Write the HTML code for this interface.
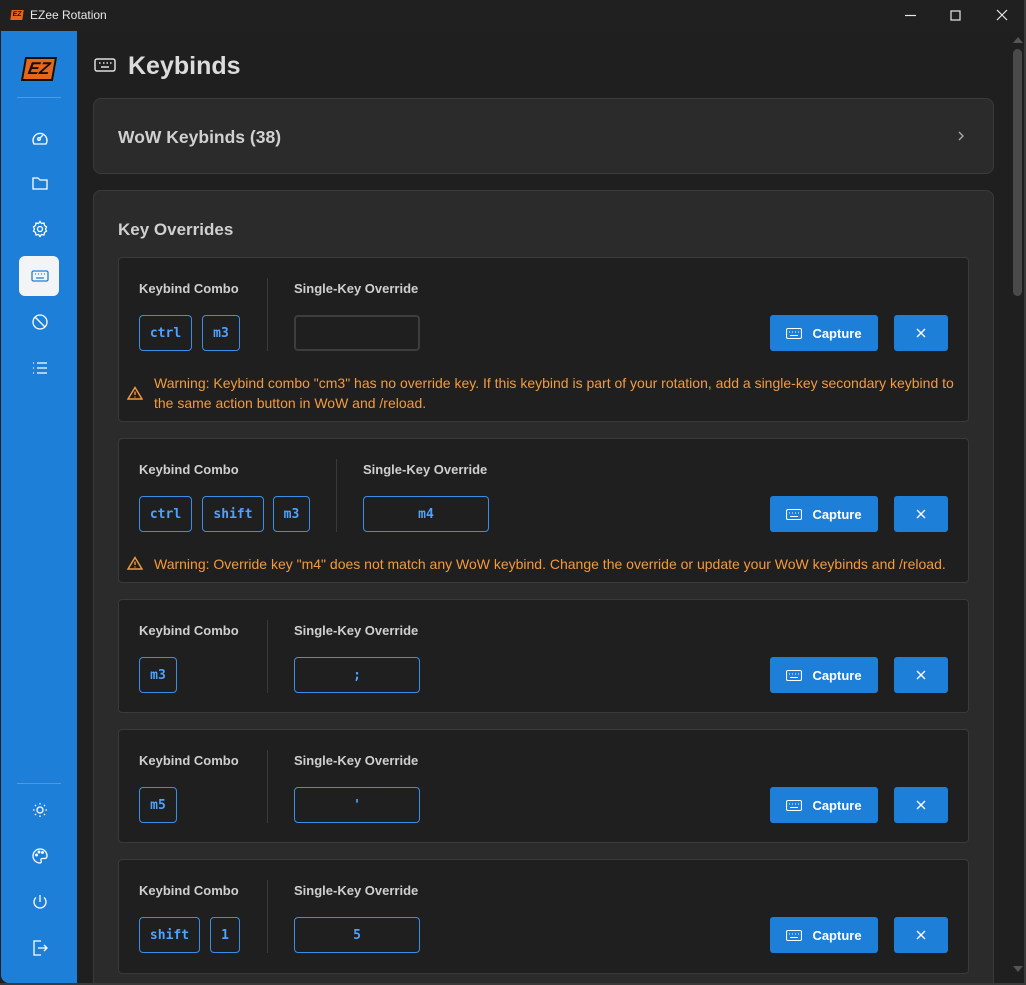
<!DOCTYPE html>
<html><head><meta charset="utf-8"><style>
*{box-sizing:border-box;margin:0;padding:0}
html{width:1026px;height:985px;overflow:hidden}
body{width:1026px;height:985px;background:#1f1f1f;font-family:"Liberation Sans",sans-serif;position:relative;overflow:hidden}
.a{position:absolute}
.title{left:0;top:0;width:1026px;height:31px;background:#202020;color:#e8e8e8;font-size:12px}
.side{left:1px;top:31px;width:76px;height:952px;background:#1e7fd8;border-radius:0 0 0 8px}
.ic{position:absolute;left:29px;width:20px;height:20px}
.card{position:absolute;left:93px;width:901px;background:#2b2b2b;border:1px solid #3a3a3a;border-radius:8px}
.in{position:absolute;left:118px;width:851px;background:#1f1f1f;border:1px solid #3a3a3a;border-radius:4px}
.lbl{position:absolute;font-size:13px;font-weight:bold;color:#cfcfcf;top:23px}
.chip{position:absolute;top:57px;height:36px;border:1px solid #3a8ee6;border-radius:4px;color:#4da3ff;font-family:"DejaVu Sans Mono","Liberation Mono",monospace;font-weight:bold;font-size:13px;display:flex;align-items:center;justify-content:center}
.ov{position:absolute;top:57px;height:36px;width:126px;border:1px solid #3a8ee6;border-radius:4px;color:#4da3ff;font-family:"DejaVu Sans Mono","Liberation Mono",monospace;font-weight:bold;font-size:13px;display:flex;align-items:center;justify-content:center}
.div{position:absolute;top:20px;height:73px;width:1px;background:#3a3a3a}
.cap{position:absolute;left:651px;top:57px;width:108px;height:36px;background:#1e7fd8;border-radius:3px;color:#fff;font-weight:bold;font-size:13px;display:flex;align-items:center;justify-content:center;gap:10px}
.x{position:absolute;left:775px;top:57px;width:54px;height:36px;background:#1e7fd8;border-radius:3px;display:flex;align-items:center;justify-content:center}
.warn{position:absolute;left:35px;color:#f59a3c;font-size:14px;line-height:20px;width:812px;white-space:nowrap}
.wi{position:absolute;left:8px}
</style></head><body>
<div class="a title">
<div class="a" style="left:11px;top:10px;width:12px;height:10px;background:#e8661a;color:#111;font-size:7px;font-weight:bold;line-height:10px;text-align:center;transform:skewX(-8deg)">EZ</div>
<div class="a" style="left:30px;top:8px">EZee Rotation</div>
<svg class="a" style="left:900px;top:8px" width="120" height="16" stroke="#e8e8e8" stroke-width="1.2" fill="none"><line x1="5" y1="7.5" x2="16" y2="7.5"/><rect x="51" y="3" width="9" height="9"/><path d="M97 2l10 10M107 2l-10 10"/></svg>
</div>
<div class="a side">
<div class="a" style="left:22px;top:26px;width:32px;height:24px;background:#e8661a;border:2px solid #111;color:#111;font-weight:bold;font-size:17px;line-height:20px;text-align:center;transform:skewX(-10deg);font-style:italic">EZ</div>
<div class="a" style="left:16px;top:66px;width:44px;height:1px;background:#4b9ae6"></div>
<svg class="ic" style="top:97px" viewBox="0 0 20 20" fill="none" stroke="#fff" stroke-width="1.3"><path d="M4 16a7 7 0 1 1 12 0z"/><circle cx="9" cy="11" r="1.3"/><path d="M10 10l3-3"/></svg>
<svg class="ic" style="top:142px" viewBox="0 0 20 20" fill="none" stroke="#fff" stroke-width="1.3"><path d="M3 5h5l2 2h7v9H3z"/></svg>
<svg class="ic" style="top:188px" viewBox="0 0 20 20" fill="none" stroke="#fff" stroke-width="1.3"><circle cx="10" cy="10" r="2.5"/><path d="M10 2.5l1.5 2 2.5-.5.5 2.5 2 1.5-1 2 1 2-2 1.5-.5 2.5-2.5-.5-1.5 2-1.5-2-2.5.5-.5-2.5-2-1.5 1-2-1-2 2-1.5.5-2.5 2.5.5z"/></svg>
<div class="a" style="left:18px;top:225px;width:40px;height:40px;background:#f3f4f6;border-radius:6px"></div>
<svg class="ic" style="top:235px" viewBox="0 0 20 20" fill="none" stroke="#1e7fd8" stroke-width="1.3"><rect x="2" y="5" width="16" height="10" rx="1.5"/><path d="M5 8h1M8 8h1M11 8h1M14 8h1M6 12h8"/></svg>
<svg class="ic" style="top:281px" viewBox="0 0 20 20" fill="none" stroke="#fff" stroke-width="1.3"><circle cx="10" cy="10" r="7"/><path d="M5 5l10 10"/></svg>
<svg class="ic" style="top:327px" viewBox="0 0 20 20" fill="none" stroke="#fff" stroke-width="1.3"><path d="M3 5h1M3 10h1M3 15h1M7 5h10M7 10h10M7 15h10"/></svg>
<div class="a" style="left:16px;top:752px;width:44px;height:1px;background:#4b9ae6"></div>
<svg class="ic" style="top:769px" viewBox="0 0 20 20" fill="none" stroke="#fff" stroke-width="1.3"><circle cx="10" cy="10" r="3"/><path d="M10 3v1.5M10 15.5V17M3 10h1.5M15.5 10H17M5 5l1 1M14 14l1 1M5 15l1-1M14 6l1-1"/></svg>
<svg class="ic" style="top:815px" viewBox="0 0 20 20" fill="none" stroke="#fff" stroke-width="1.3"><path d="M10 3a7 7 0 0 0 0 14c1.5 0 1.5-1.5 1-2.5s0-2 1.5-2H15a2.5 2.5 0 0 0 2-2.5C17 6 14 3 10 3z"/><circle cx="6.5" cy="9" r=".8"/><circle cx="9" cy="6" r=".8"/><circle cx="12.5" cy="6.5" r=".8"/></svg>
<svg class="ic" style="top:861px" viewBox="0 0 20 20" fill="none" stroke="#fff" stroke-width="1.3"><path d="M10 3v7M6 5.5a6 6 0 1 0 8 0"/></svg>
<svg class="ic" style="top:907px" viewBox="0 0 20 20" fill="none" stroke="#fff" stroke-width="1.3"><path d="M11 3H4v14h7M8 10h9M14 7l3 3-3 3"/></svg>
</div>
<svg class="a" style="left:94px;top:57px" width="22" height="16" viewBox="0 0 22 16" fill="none" stroke="#ddd" stroke-width="1.5"><rect x="1" y="2" width="20" height="12" rx="2"/><path d="M5 6h1.5M9 6h1.5M12.5 6h1.5M16 6h1.5M7 10h8"/></svg>
<div class="a" style="left:128px;top:52px;font-size:25px;font-weight:bold;color:#dcdcdc">Keybinds</div>
<div class="card" style="top:98px;height:76px"><div class="a" style="left:24px;top:28px;font-size:17.5px;font-weight:bold;color:#d0d0d0">WoW Keybinds (38)</div>
<svg class="a" style="left:862px;top:31px" width="10" height="12" fill="none" stroke="#aaa" stroke-width="1.4"><path d="M3 2l4 4-4 4"/></svg></div>
<div class="card" style="top:190px;height:830px"><div class="a" style="left:24px;top:29px;font-size:17px;font-weight:bold;color:#d0d0d0">Key Overrides</div></div>

<!-- card 1 -->
<div class="in" style="top:257px;height:165px">
<div class="lbl" style="left:20px">Keybind Combo</div><div class="lbl" style="left:175px">Single-Key Override</div>
<div class="chip" style="left:20px;width:53px">ctrl</div><div class="chip" style="left:83px;width:38px">m3</div>
<div class="div" style="left:148px"></div>
<div class="ov" style="left:175px;border:2px solid #3d3d3d"></div>
<div class="cap"><svg width="16" height="11" fill="none" stroke="#fff" stroke-width="1.1"><rect x=".5" y=".5" width="15" height="10" rx="1.5"/><path d="M3 4h1M6 4h1M9 4h1M12 4h1M4 7.5h8"/></svg>Capture</div>
<div class="x"><svg width="12" height="12" stroke="#fff" stroke-width="1.4"><path d="M2 2l8 8M10 2l-8 8"/></svg></div>
<svg class="wi" style="top:128px" width="16" height="14" fill="none" stroke="#f59a3c" stroke-width="1.4"><path d="M8 1.5L15 13H1z"/><path d="M8 5.5v3.5M8 10.5v1"/></svg>
<div class="warn" style="top:115px">Warning: Keybind combo "cm3" has no override key. If this keybind is part of your rotation, add a single-key secondary keybind to<br>the same action button in WoW and /reload.</div>
</div>
<!-- card 2 -->
<div class="in" style="top:438px;height:145px">
<div class="lbl" style="left:20px">Keybind Combo</div><div class="lbl" style="left:244px">Single-Key Override</div>
<div class="chip" style="left:20px;width:53px">ctrl</div><div class="chip" style="left:83px;width:62px">shift</div><div class="chip" style="left:154px;width:37px">m3</div>
<div class="div" style="left:217px"></div>
<div class="ov" style="left:244px">m4</div>
<div class="cap"><svg width="16" height="11" fill="none" stroke="#fff" stroke-width="1.1"><rect x=".5" y=".5" width="15" height="10" rx="1.5"/><path d="M3 4h1M6 4h1M9 4h1M12 4h1M4 7.5h8"/></svg>Capture</div>
<div class="x"><svg width="12" height="12" stroke="#fff" stroke-width="1.4"><path d="M2 2l8 8M10 2l-8 8"/></svg></div>
<svg class="wi" style="top:117px" width="16" height="14" fill="none" stroke="#f59a3c" stroke-width="1.4"><path d="M8 1.5L15 13H1z"/><path d="M8 5.5v3.5M8 10.5v1"/></svg>
<div class="warn" style="top:115px">Warning: Override key "m4" does not match any WoW keybind. Change the override or update your WoW keybinds and /reload.</div>
</div>
<!-- card 3 -->
<div class="in" style="top:599px;height:114px">
<div class="lbl" style="left:20px">Keybind Combo</div><div class="lbl" style="left:175px">Single-Key Override</div>
<div class="chip" style="left:20px;width:38px">m3</div>
<div class="div" style="left:148px"></div>
<div class="ov" style="left:175px">;</div>
<div class="cap"><svg width="16" height="11" fill="none" stroke="#fff" stroke-width="1.1"><rect x=".5" y=".5" width="15" height="10" rx="1.5"/><path d="M3 4h1M6 4h1M9 4h1M12 4h1M4 7.5h8"/></svg>Capture</div>
<div class="x"><svg width="12" height="12" stroke="#fff" stroke-width="1.4"><path d="M2 2l8 8M10 2l-8 8"/></svg></div>
</div>
<!-- card 4 -->
<div class="in" style="top:729px;height:114px">
<div class="lbl" style="left:20px">Keybind Combo</div><div class="lbl" style="left:175px">Single-Key Override</div>
<div class="chip" style="left:20px;width:38px">m5</div>
<div class="div" style="left:148px"></div>
<div class="ov" style="left:175px">'</div>
<div class="cap"><svg width="16" height="11" fill="none" stroke="#fff" stroke-width="1.1"><rect x=".5" y=".5" width="15" height="10" rx="1.5"/><path d="M3 4h1M6 4h1M9 4h1M12 4h1M4 7.5h8"/></svg>Capture</div>
<div class="x"><svg width="12" height="12" stroke="#fff" stroke-width="1.4"><path d="M2 2l8 8M10 2l-8 8"/></svg></div>
</div>
<!-- card 5 -->
<div class="in" style="top:859px;height:115px">
<div class="lbl" style="left:20px">Keybind Combo</div><div class="lbl" style="left:175px">Single-Key Override</div>
<div class="chip" style="left:20px;width:61px">shift</div><div class="chip" style="left:91px;width:30px">1</div>
<div class="div" style="left:148px"></div>
<div class="ov" style="left:175px">5</div>
<div class="cap"><svg width="16" height="11" fill="none" stroke="#fff" stroke-width="1.1"><rect x=".5" y=".5" width="15" height="10" rx="1.5"/><path d="M3 4h1M6 4h1M9 4h1M12 4h1M4 7.5h8"/></svg>Capture</div>
<div class="x"><svg width="12" height="12" stroke="#fff" stroke-width="1.4"><path d="M2 2l8 8M10 2l-8 8"/></svg></div>
</div>
<!-- scrollbar -->
<svg class="a" style="left:1012px;top:36px" width="12" height="8"><path d="M6 1l5 6H1z" fill="#555"/></svg>
<div class="a" style="left:1013px;top:49px;width:9px;height:247px;background:#4a4a4a;border-radius:5px"></div>
<svg class="a" style="left:1012px;top:965px" width="12" height="8"><path d="M6 7l5-6H1z" fill="#555"/></svg>
<div class="a" style="left:1024px;top:0;width:2px;height:985px;background:#3a3a3a"></div>
<div class="a" style="left:0;top:983px;width:1026px;height:2px;background:#3a3a3a"></div>
</body></html>
